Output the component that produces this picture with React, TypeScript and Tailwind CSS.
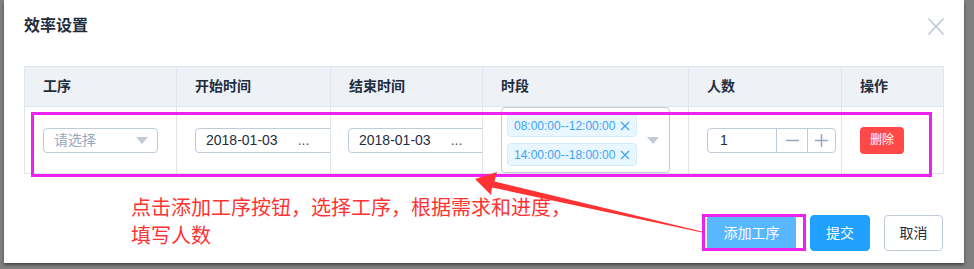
import React from 'react';

const Caret = () => (
  <svg width="12" height="7" viewBox="0 0 12 7" className="shrink-0">
    <path d="M0 0 L12 0 L6 7 Z" fill="#bfcbd9" />
  </svg>
);

const Tag = ({ label }: { label: string }) => (
  <div className="flex h-[23px] w-[130px] items-center gap-[5px] whitespace-nowrap rounded-[4px] border border-[#d2ecff] bg-[#e8f6ff] pl-[6px] text-[12px] text-[#3fa2f7]">
    <span>{label}</span>
    <svg width="10" height="10" viewBox="0 0 10 10" className="shrink-0">
      <path d="M1 1 L9 9 M9 1 L1 9" stroke="#3fa2f7" strokeWidth="1.3" />
    </svg>
  </div>
);

const DateInput = () => (
  <div className="flex h-[25px] w-[220px] shrink-0 items-center rounded-[4px] border border-[#bfcbd9] pl-[10px] text-[14px] text-[#1f2d3d]">
    <span>2018-01-03</span>
    <span className="ml-[20px] text-[#48576a]">...</span>
  </div>
);

const headers = ['工序', '开始时间', '结束时间', '时段', '人数', '操作'];

export default function App() {
  return (
    <div className="relative h-[269px] w-[974px] overflow-hidden bg-[#808080] font-['Liberation_Sans','Noto_Sans_CJK_SC',sans-serif]">
      <div className="ml-[4px] h-[263px] w-[960px] bg-white shadow-[0_2px_3px_rgba(0,0,0,0.45)]">
        {/* header */}
        <div className="flex h-[52px] items-center justify-between pl-[20px] pr-[20px]">
          <span className="text-[16px] font-bold text-[#1f2d3d]">效率设置</span>
          <svg width="16" height="17" viewBox="0 0 16 17">
            <path d="M0.5 0.5 L15.5 16.5 M15.5 0.5 L0.5 16.5" stroke="#bfcbd9" strokeWidth="1.6" />
          </svg>
        </div>

        {/* table */}
        <div className="ml-[20px] mt-[14px] grid w-[920px] grid-cols-[152px_154px_152px_206px_153px_102px] border-l border-t border-[#dfe6ec]">
          {headers.map((h) => (
            <div
              key={h}
              className="flex h-[40px] items-center border-b border-r border-[#dfe6ec] bg-[#eef1f6] pl-[18px] text-[14px] font-bold text-[#1f2d3d]"
            >
              {h}
            </div>
          ))}

          <div className="flex h-[67px] items-center border-b border-r border-[#dfe6ec] pl-[18px]">
            <div className="flex h-[25px] w-[115px] items-center justify-between rounded-[4px] border border-[#bfcbd9] pl-[10px] pr-[9px] text-[14px] text-[#97a8be]">
              <span>请选择</span>
              <Caret />
            </div>
          </div>
          <div className="flex h-[67px] items-center overflow-hidden border-b border-r border-[#dfe6ec] pl-[18px]">
            <DateInput />
          </div>
          <div className="flex h-[67px] items-center overflow-hidden border-b border-r border-[#dfe6ec] pl-[17px]">
            <DateInput />
          </div>
          <div className="flex h-[67px] items-center border-b border-r border-[#dfe6ec] pl-[18px]">
            <div className="flex h-[66px] w-[169px] items-center rounded-[4px] border border-[#bfcbd9]">
              <div className="flex flex-col gap-[6px] pl-[5px]">
                <Tag label="08:00:00--12:00:00" />
                <Tag label="14:00:00--18:00:00" />
              </div>
              <div className="ml-auto mr-[10px]">
                <Caret />
              </div>
            </div>
          </div>
          <div className="flex h-[67px] items-center border-b border-r border-[#dfe6ec] pl-[18px]">
            <div className="flex h-[25px] w-[129px] items-stretch rounded-[4px] border border-[#bfcbd9] text-[14px] text-[#1f2d3d]">
              <div className="flex w-[68px] items-center pl-[12px]">1</div>
              <div className="flex w-[31px] items-center justify-center border-l border-[#bfcbd9]">
                <svg width="13" height="13" viewBox="0 0 13 13">
                  <path d="M0 6.5 H13" stroke="#97a8be" strokeWidth="1.5" />
                </svg>
              </div>
              <div className="flex flex-1 items-center justify-center border-l border-[#bfcbd9]">
                <svg width="13" height="13" viewBox="0 0 13 13">
                  <path d="M0 6.5 H13 M6.5 0 V13" stroke="#97a8be" strokeWidth="1.5" />
                </svg>
              </div>
            </div>
          </div>
          <div className="flex h-[67px] items-center border-b border-r border-[#dfe6ec] pl-[18px]">
            <div className="flex h-[27px] w-[44px] items-center justify-center rounded-[4px] bg-[#ff4949] text-[12px] text-white">
              删除
            </div>
          </div>
        </div>

        {/* footer */}
        <div className="flex justify-end gap-[14px] pr-[21px] pt-[41px]">
          <button className="flex h-[36px] w-[89px] items-center justify-center rounded-[4px] border border-[#58b7ff] bg-[#58b7ff] text-[14px] text-white">
            添加工序
          </button>
          <button className="flex h-[36px] w-[60px] items-center justify-center rounded-[4px] border border-[#20a0ff] bg-[#20a0ff] text-[14px] text-white">
            提交
          </button>
          <button className="flex h-[36px] w-[59px] items-center justify-center rounded-[4px] border border-[#bfcbd9] bg-white text-[14px] text-[#1f2d3d]">
            取消
          </button>
        </div>
      </div>

      {/* annotation overlay */}
      <div className="absolute left-[31px] top-[112px] h-[65px] w-[901px] border-[3px] border-[#ee22ee]" />
      <div className="absolute left-[702px] top-[214px] h-[37px] w-[104px] border-[3px] border-[#ee22ee]" />
      <div className="absolute left-[131px] top-[194px] text-[20px] leading-[28px] text-[#ff3333]">
        <div>点击添加工序按钮，选择工序，根据需求和进度，</div>
        <div>填写人数</div>
      </div>
      <svg className="absolute left-0 top-0" width="974" height="269" viewBox="0 0 974 269">
        <polygon
          points="475,179 497,172 494.5,181.5 702,231.6 702,232.6 492,187.5 491,195"
          fill="#ff3333"
        />
      </svg>
    </div>
  );
}
